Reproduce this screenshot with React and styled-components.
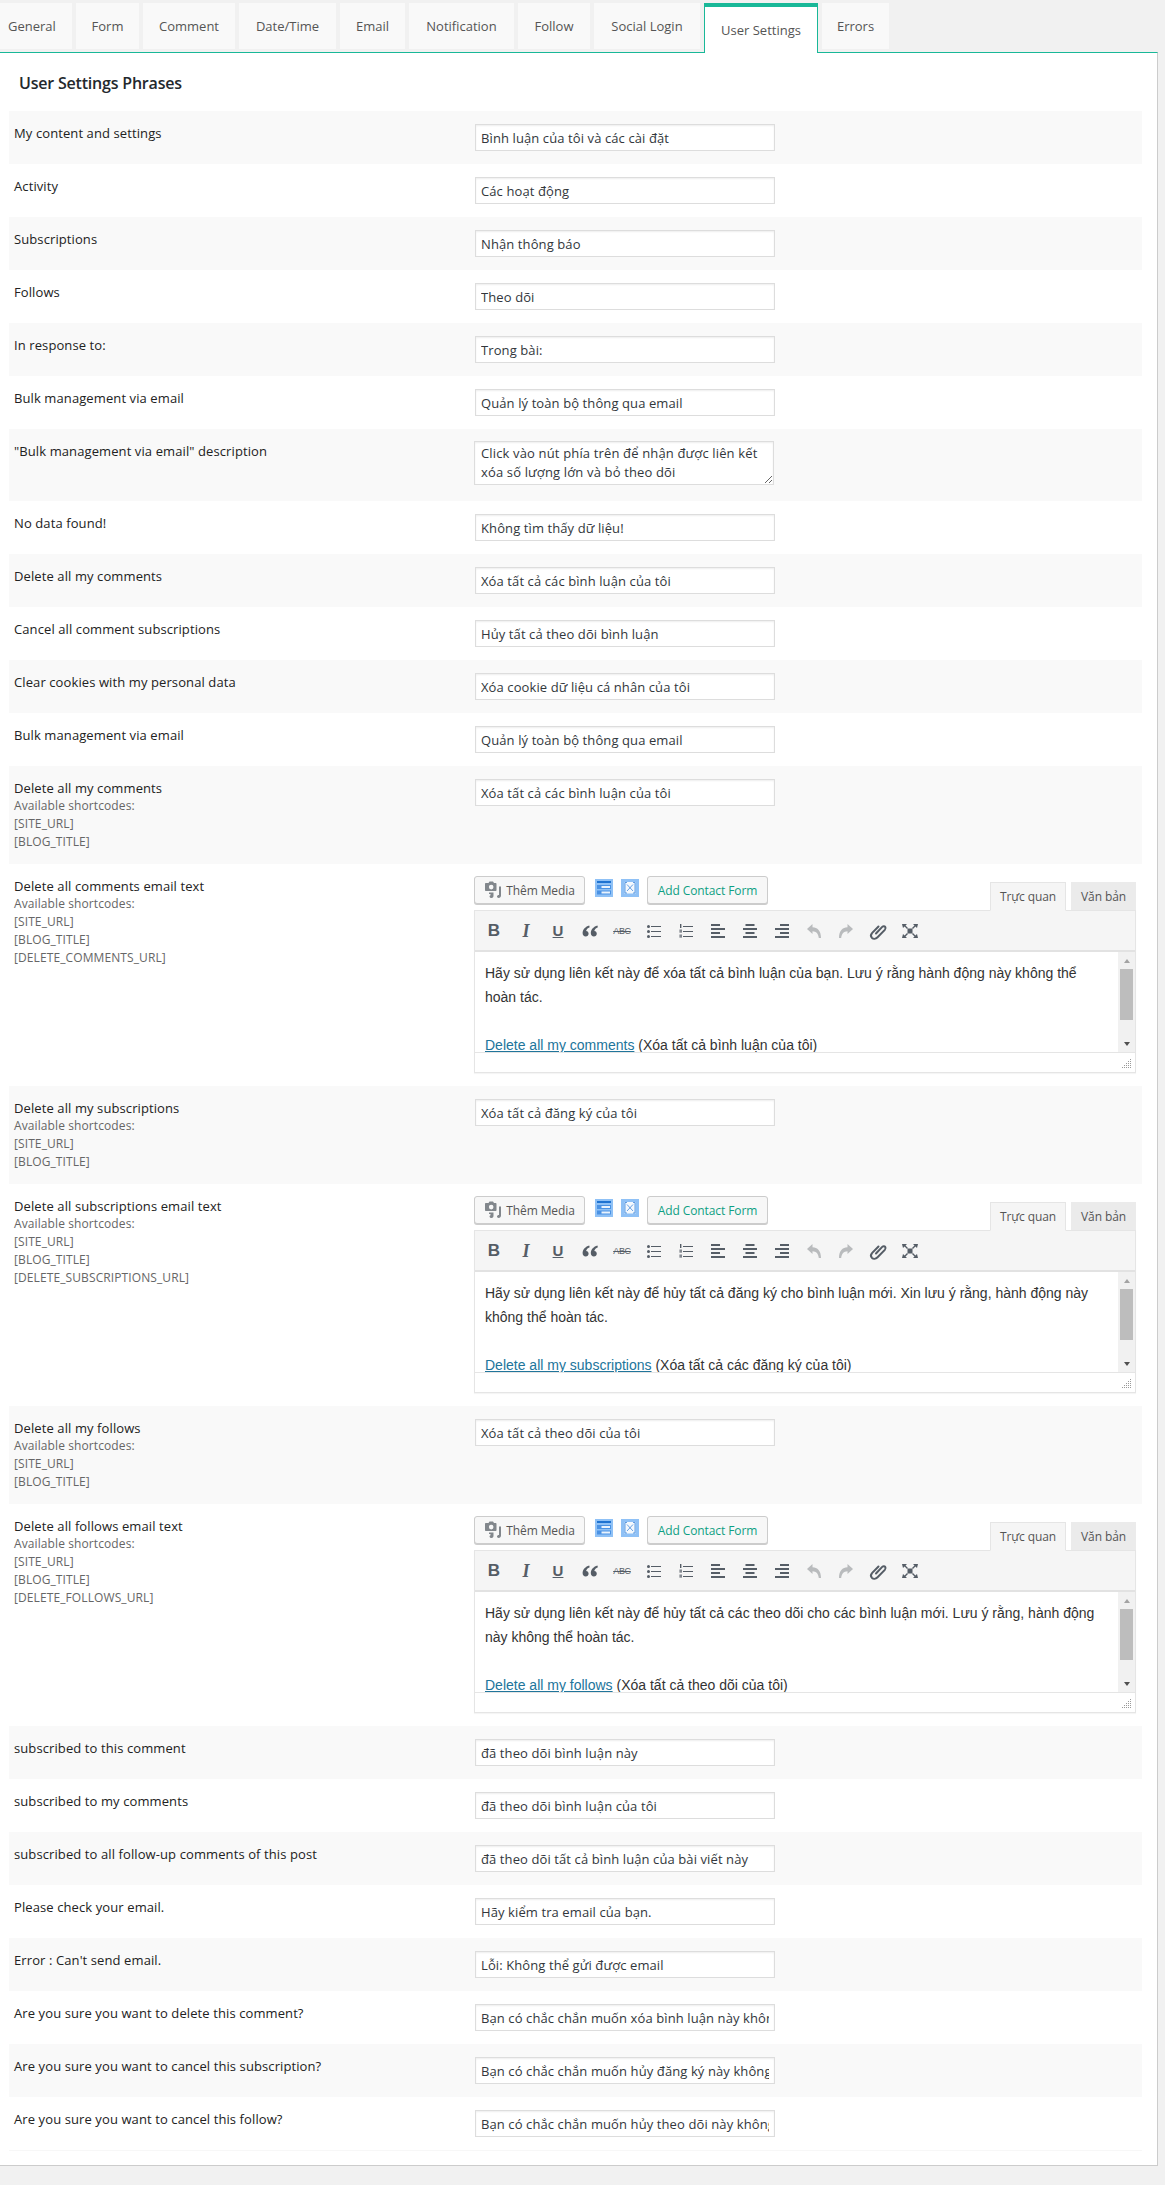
import React from 'react';
import styled, { createGlobalStyle } from 'styled-components';

const TEAL = '#19b898';

const GlobalStyle = createGlobalStyle`
  html, body { margin: 0; padding: 0; background: #f1f1f1; }
  body { font-family: "Open Sans", "Noto Sans", sans-serif; font-size: 13px; color: #444; }
`;

const Page = styled.div`
  width: 1165px;
  height: 2185px;
  padding-top: 3px;
  box-sizing: border-box;
  overflow: hidden;
`;

const TabBar = styled.div`
  display: flex;
  gap: 4px;
  width: 1158px;
  height: 49px;
`;

const Tab = styled.div`
  box-sizing: border-box;
  width: ${(p) => p.$w}px;
  height: ${(p) => (p.$active ? 50 : 46)}px;
  display: flex;
  align-items: center;
  justify-content: ${(p) => (p.$first ? 'flex-start' : 'center')};
  padding-left: ${(p) => (p.$first ? 8 : 0)}px;
  background: ${(p) => (p.$active ? '#fff' : '#f9f9f9')};
  color: #555;
  font-size: 13px;
  font-weight: 500;
  white-space: nowrap;
  position: relative;
  z-index: ${(p) => (p.$active ? 2 : 1)};
  ${(p) => p.$active && `
    border-top: 4px solid ${TEAL};
    border-left: 1px solid ${TEAL};
    border-right: 1px solid ${TEAL};
  `}
`;

const Panel = styled.div`
  box-sizing: border-box;
  width: 1158px;
  height: 2114px;
  background: #fff;
  border-top: 1px solid ${TEAL};
  border-right: 1px solid #ccc;
  border-bottom: 1px solid #ccc;
  padding: 0 15px 15px 9px;
`;

const Title = styled.h3`
  margin: 0 0 17px;
  padding: 19px 0 0 10px;
  font-size: 16px;
  line-height: 22px;
  font-weight: 600;
  letter-spacing: -0.2px;
  color: #23282d;
`;

const Row = styled.div`
  display: grid;
  grid-template-columns: 466px 1fr;
  padding: 13px 0;
  background: #fff;
  &:nth-child(odd) { background: #f9f9f9; }
  &:last-child { border-bottom: 1px solid #f7f7f7; margin-bottom: -1px; }
`;

const LabelCell = styled.div`
  padding-left: 5px;
  font-size: 13px;
  line-height: 18px;
  letter-spacing: 0.1px;
  color: #222;
`;

const Hint = styled.div`
  font-size: 12px;
  color: #666;
  letter-spacing: 0.1px;
`;

const TextInput = styled.input`
  display: block;
  box-sizing: border-box;
  width: 300px;
  height: 27px;
  margin: 0;
  padding: 0 5px;
  background: #fff;
  border: 1px solid #ddd;
  box-shadow: inset 0 1px 2px rgba(0, 0, 0, 0.07);
  border-radius: 0;
  outline: none;
  font-family: inherit;
  font-size: 13px;
  letter-spacing: 0.1px;
  color: #32373c;
`;

const TextArea = styled.textarea`
  display: block;
  box-sizing: border-box;
  width: 300px;
  height: 44px;
  margin: -1px 0 3px -1px;
  padding: 2px 6px;
  background: #fff;
  border: 1px solid #ddd;
  box-shadow: inset 0 1px 2px rgba(0, 0, 0, 0.07);
  border-radius: 0;
  outline: none;
  overflow: hidden;
  font-family: inherit;
  font-size: 13px;
  line-height: 19px;
  letter-spacing: 0.15px;
  color: #32373c;
`;

const Editor = styled.div`
  width: 662px;
  margin: -1px 0 0 -1px;
`;

const EditorTop = styled.div`
  display: flex;
  align-items: flex-start;
  height: 34px;
`;

const MediaButton = styled.div`
  box-sizing: border-box;
  display: flex;
  align-items: center;
  justify-content: center;
  gap: 4px;
  width: ${(p) => p.$w}px;
  height: 28px;
  margin-left: ${(p) => p.$ml || 0}px;
  background: #f7f7f7;
  border: 1px solid #ccc;
  border-radius: 3px;
  box-shadow: 0 1px 0 #ccc;
  font-size: 12px;
  letter-spacing: -0.1px;
  color: ${(p) => (p.$green ? '#0e9f83' : '#555')};
  white-space: nowrap;
`;

const ShortcodeIcon = styled.svg`
  width: 18px;
  height: 18px;
  margin-top: 3px;
  margin-left: ${(p) => p.$ml}px;
  flex: none;
`;

const ModeTabs = styled.div`
  display: flex;
  gap: 5px;
  margin: 6px 0 0 auto;
  position: relative;
  z-index: 1;
`;

const ModeTab = styled.div`
  box-sizing: border-box;
  width: ${(p) => p.$w}px;
  height: ${(p) => (p.$active ? 29 : 28)}px;
  display: flex;
  align-items: center;
  justify-content: center;
  background: ${(p) => (p.$active ? '#f5f5f5' : '#ebebeb')};
  border: 1px solid ${(p) => (p.$active ? '#e5e5e5' : '#ebebeb')};
  border-bottom: ${(p) => (p.$active ? '1px solid #f5f5f5' : '1px solid #ebebeb')};
  font-size: 12px;
  letter-spacing: -0.1px;
  color: #555;
`;

const Frame = styled.div`
  border: 1px solid #e5e5e5;
  border-top: none;
  background: #fff;
  box-shadow: 0 1px 1px rgba(0, 0, 0, 0.04);
`;

const Toolbar = styled.div`
  box-sizing: border-box;
  height: 42px;
  display: flex;
  align-items: center;
  gap: 12px;
  padding: 0 0 0 9px;
  background: #f5f5f5;
  border-top: 1px solid #e5e5e5;
  border-bottom: 2px solid #e2e2e2;
`;

const ToolIcon = styled.div`
  width: 20px;
  height: 20px;
  flex: none;
  display: flex;
  align-items: center;
  justify-content: center;
  color: ${(p) => (p.$off ? '#b9bbbd' : '#555d66')};
  font-family: ${(p) => (p.$italic ? '"Liberation Serif", serif' : '"Liberation Sans", sans-serif')};
  font-size: ${(p) => p.$size || 17}px;
  font-weight: 700;
  font-style: ${(p) => (p.$italic ? 'italic' : 'normal')};
  text-decoration: ${(p) => p.$deco || 'none'};
  line-height: 20px;
`;

const Strike = styled.span`
  font-size: 9px;
  text-decoration: line-through;
  letter-spacing: -0.3px;
  font-weight: 400;
`;

const Body = styled.div`
  display: flex;
  height: 100px;
`;

const Content = styled.div`
  flex: 1;
  min-width: 0;
  overflow: hidden;
  box-sizing: border-box;
  padding: 9px 9px 0 10px;
  font-family: "Liberation Sans", Arial, sans-serif;
  font-size: 14px;
  line-height: 24px;
  color: #333;
`;

const Para = styled.p`
  margin: 0 0 24px;
`;

const MailLink = styled.span`
  color: #21759b;
  text-decoration: underline;
`;

const Scroll = styled.div`
  width: 17px;
  flex: none;
  background: #f1f1f1;
  display: flex;
  flex-direction: column;
  align-items: center;
  padding-top: 7px;
  box-sizing: border-box;
`;

const ScrollThumb = styled.div`
  width: 13px;
  height: 51px;
  margin: 6px 0 22px;
  background: #bdbdbd;
`;

const Arrow = styled.div`
  width: 0;
  height: 0;
  border-left: 3.5px solid transparent;
  border-right: 3.5px solid transparent;
  ${(p) => (p.$up ? 'border-bottom: 4px solid #a3a3a3;' : 'border-top: 4px solid #505050;')}
`;

const StatusBar = styled.div`
  box-sizing: border-box;
  height: 20px;
  border-top: 1px solid #e5e5e5;
  display: flex;
  justify-content: flex-end;
  align-items: flex-end;
  padding: 0 3px 3px 0;
`;

const icon = (children) => (
  <svg width="20" height="20" viewBox="0 0 20 20" fill="currentColor">{children}</svg>
);

const BulletsIcon = () => icon(
  <>
    <rect x="3" y="4" width="3" height="3" rx="1.5" />
    <rect x="3" y="9" width="3" height="3" rx="1.5" />
    <rect x="3" y="14" width="3" height="3" rx="1.5" />
    <rect x="7" y="5" width="10" height="1" />
    <rect x="7" y="10" width="10" height="1" />
    <rect x="7" y="15" width="10" height="1" />
  </>
);

const NumbersIcon = () => icon(
  <>
    <rect x="4" y="3" width="1.4" height="4" />
    <rect x="3.4" y="8.5" width="2.6" height="3.2" opacity="0.7" />
    <rect x="3.4" y="13.5" width="2.6" height="3.2" opacity="0.7" />
    <rect x="7" y="5" width="10" height="1" />
    <rect x="7" y="10" width="10" height="1" />
    <rect x="7" y="15" width="10" height="1" />
  </>
);

// x offsets for the short bars of each alignment icon
const AlignIcon = ({ x }) => icon(
  <>
    <rect x={x} y="3" width="9" height="2" />
    <rect x="3" y="7" width="14" height="2" />
    <rect x={x} y="11" width="9" height="2" />
    <rect x="3" y="15" width="14" height="2" />
  </>
);

const QuoteIcon = () => icon(
  <path d="M9.2 4.5C5.6 5.6 2.6 8.3 2.6 12c0 2.1 1.3 3.6 3.1 3.6 1.6 0 2.9-1.2 2.9-2.8 0-1.5-1-2.6-2.5-2.7.3-1.7 1.6-3.1 3.6-3.9zM17.4 4.500c-3.600 1.100-6.600 3.800-6.600 7.500 0 2.100 1.300 3.600 3.100 3.600 1.600 0 2.900-1.200 2.900-2.800 0-1.500-1-2.600-2.500-2.700.3-1.700 1.600-3.100 3.600-3.900z" />
);

const UndoIcon = ({ flip }) => (
  <svg width="20" height="20" viewBox="0 0 20 20" fill="currentColor" style={flip ? { transform: 'scaleX(-1)' } : undefined}>
    <path d="M3 8l5.5-5v3.2c5 .2 8.5 3.4 8.5 10.8h-2.2c-.4-4.4-2.6-6.6-6.300-6.800V13z" />
  </svg>
);

const LinkIcon = () => (
  <svg width="20" height="20" viewBox="0 0 20 20" fill="none" stroke="currentColor" strokeWidth="2">
    <path d="M8 12.500l6.200-6.600c1-1 2.500-.9 3 0 .7 1 .4 2.100-.4 3l-7.500 7.600c-1.600 1.600-4 1.600-5.300.4-1.400-1.400-1.200-3.500.2-5l6.300-6.400" strokeLinecap="round" />
  </svg>
);

const FullscreenIcon = () => icon(
  <>
    <path d="M2 3h5L5.500 4.600 8 7 7 8 4.600 5.500 3 7zM18 3h-5l1.500 1.600L12 7l1 1 2.400-2.500L17 7zM2 17h5l-1.500-1.600L8 13l-1-1-2.400 2.500L3 13zM18 17h-5l1.500-1.600L12 13l1-1 2.400 2.500L17 13z" />
    <rect x="7.500" y="7.500" width="5" height="5" />
  </>
);

const MediaIcon = () => (
  <svg width="18" height="18" viewBox="0 0 18 18" fill="#82878c">
    <path d="M2.500 2h2l1-1.500h3.500l1 1.500h1.500c.6 0 1 .4 1 1v6c0 .6-.4 1-1 1h-9.500c-.6 0-1-.4-1-1V3c0-.6.4-1 1-1zm4.700 1.800a2.300 2.300 0 100 4.600 2.300 2.300 0 000-4.600z" />
    <path d="M15 5.500h2v9c0 1.400-1 2.500-2.300 2.500-1 0-1.700-.6-1.700-1.400 0-.9.800-1.600 2-1.600V5.500zM5 11.500h4.500v3.500c0 1.100-.9 2-2 2S5.500 16.300 5.500 15.500c0-.6.400-1.100 1-1.300v-1.200H5z" />
  </svg>
);

const FormsIcon = () => (
  <ShortcodeIcon viewBox="0 0 18 18" $ml={10}>
    <rect width="18" height="18" fill="#8fc1f6" />
    <rect x="2" y="2" width="14" height="2" fill="#1f73d1" />
    <rect x="2" y="6" width="14" height="4" fill="#4a92e4" />
    <rect x="2" y="11.500" width="14" height="4" fill="#4a92e4" />
    <rect x="6.500" y="7" width="8.500" height="2" fill="#eaf3fd" />
    <rect x="6.500" y="12.500" width="8.500" height="2" fill="#eaf3fd" />
  </ShortcodeIcon>
);

const CloseFormIcon = () => (
  <ShortcodeIcon viewBox="0 0 18 18" $ml={8}>
    <rect width="18" height="18" fill="#8fc1f6" />
    <rect x="3.500" y="3" width="11" height="11.500" fill="#f4f9fe" />
    <path d="M6 3.500H4v10.500h2M12 3.500h2v10.500h-2M6 5.500l6 6.500M12 5.500l-6 6.500" fill="none" stroke="#2a78d6" strokeWidth="0.7" />
  </ShortcodeIcon>
);

const ResizeGrip = () => (
  <svg width="10" height="10" viewBox="0 0 10 10" fill="#9a9a9a">
    {[[8, 0], [6, 2], [8, 2], [4, 4], [6, 4], [8, 4], [2, 6], [4, 6], [6, 6], [8, 6], [0, 8], [2, 8], [4, 8], [6, 8], [8, 8]].map(([x, y]) => (
      <rect key={`${x}-${y}`} x={x} y={y} width="1" height="1" />
    ))}
  </svg>
);

const EmailEditor = ({ text, linkText, after }) => (
  <Editor>
    <EditorTop>
      <MediaButton $w={111}><MediaIcon />Thêm Media</MediaButton>
      <FormsIcon />
      <CloseFormIcon />
      <MediaButton $w={121} $ml={8} $green>Add Contact Form</MediaButton>
      <ModeTabs>
        <ModeTab $w={76} $active>Trực quan</ModeTab>
        <ModeTab $w={65}>Văn bản</ModeTab>
      </ModeTabs>
    </EditorTop>
    <Frame>
      <Toolbar>
        <ToolIcon>B</ToolIcon>
        <ToolIcon $size={18} $italic>I</ToolIcon>
        <ToolIcon $size={15} $deco="underline">U</ToolIcon>
        <ToolIcon><QuoteIcon /></ToolIcon>
        <ToolIcon><Strike>ABC</Strike></ToolIcon>
        <ToolIcon><BulletsIcon /></ToolIcon>
        <ToolIcon><NumbersIcon /></ToolIcon>
        <ToolIcon><AlignIcon x={3} /></ToolIcon>
        <ToolIcon><AlignIcon x={5.5} /></ToolIcon>
        <ToolIcon><AlignIcon x={8} /></ToolIcon>
        <ToolIcon $off><UndoIcon /></ToolIcon>
        <ToolIcon $off><UndoIcon flip /></ToolIcon>
        <ToolIcon><LinkIcon /></ToolIcon>
        <ToolIcon><FullscreenIcon /></ToolIcon>
      </Toolbar>
      <Body>
        <Content>
          <Para>{text}</Para>
          <Para><MailLink>{linkText}</MailLink> {after}</Para>
        </Content>
        <Scroll>
          <Arrow $up />
          <ScrollThumb />
          <Arrow />
        </Scroll>
      </Body>
      <StatusBar><ResizeGrip /></StatusBar>
    </Frame>
  </Editor>
);

const rows = [
  { label: 'My content and settings', value: 'Bình luận của tôi và các cài đặt' },
  { label: 'Activity', value: 'Các hoạt động' },
  { label: 'Subscriptions', value: 'Nhận thông báo' },
  { label: 'Follows', value: 'Theo dõi' },
  { label: 'In response to:', value: 'Trong bài:' },
  { label: 'Bulk management via email', value: 'Quản lý toàn bộ thông qua email' },
  { label: '"Bulk management via email" description', area: 'Click vào nút phía trên để nhận được liên kết xóa số lượng lớn và bỏ theo dõi' },
  { label: 'No data found!', value: 'Không tìm thấy dữ liệu!' },
  { label: 'Delete all my comments', value: 'Xóa tất cả các bình luận của tôi' },
  { label: 'Cancel all comment subscriptions', value: 'Hủy tất cả theo dõi bình luận' },
  { label: 'Clear cookies with my personal data', value: 'Xóa cookie dữ liệu cá nhân của tôi' },
  { label: 'Bulk management via email', value: 'Quản lý toàn bộ thông qua email' },
  { label: 'Delete all my comments', hints: ['[SITE_URL]', '[BLOG_TITLE]'], value: 'Xóa tất cả các bình luận của tôi' },
  {
    label: 'Delete all comments email text',
    hints: ['[SITE_URL]', '[BLOG_TITLE]', '[DELETE_COMMENTS_URL]'],
    editor: {
      text: 'Hãy sử dụng liên kết này để xóa tất cả bình luận của bạn. Lưu ý rằng hành động này không thể hoàn tác.',
      linkText: 'Delete all my comments',
      after: '(Xóa tất cả bình luận của tôi)',
    },
  },
  { label: 'Delete all my subscriptions', hints: ['[SITE_URL]', '[BLOG_TITLE]'], value: 'Xóa tất cả đăng ký của tôi' },
  {
    label: 'Delete all subscriptions email text',
    hints: ['[SITE_URL]', '[BLOG_TITLE]', '[DELETE_SUBSCRIPTIONS_URL]'],
    editor: {
      text: 'Hãy sử dụng liên kết này để hủy tất cả đăng ký cho bình luận mới. Xin lưu ý rằng, hành động này không thể hoàn tác.',
      linkText: 'Delete all my subscriptions',
      after: '(Xóa tất cả các đăng ký của tôi)',
    },
  },
  { label: 'Delete all my follows', hints: ['[SITE_URL]', '[BLOG_TITLE]'], value: 'Xóa tất cả theo dõi của tôi' },
  {
    label: 'Delete all follows email text',
    hints: ['[SITE_URL]', '[BLOG_TITLE]', '[DELETE_FOLLOWS_URL]'],
    editor: {
      text: 'Hãy sử dụng liên kết này để hủy tất cả các theo dõi cho các bình luận mới. Lưu ý rằng, hành động này không thể hoàn tác.',
      linkText: 'Delete all my follows',
      after: '(Xóa tất cả theo dõi của tôi)',
    },
  },
  { label: 'subscribed to this comment', value: 'đã theo dõi bình luận này' },
  { label: 'subscribed to my comments', value: 'đã theo dõi bình luận của tôi' },
  { label: 'subscribed to all follow-up comments of this post', value: 'đã theo dõi tất cả bình luận của bài viết này' },
  { label: 'Please check your email.', value: 'Hãy kiểm tra email của bạn.' },
  { label: "Error : Can't send email.", value: 'Lỗi: Không thể gửi được email' },
  { label: 'Are you sure you want to delete this comment?', value: 'Bạn có chắc chắn muốn xóa bình luận này không?' },
  { label: 'Are you sure you want to cancel this subscription?', value: 'Bạn có chắc chắn muốn hủy đăng ký này không?' },
  { label: 'Are you sure you want to cancel this follow?', value: 'Bạn có chắc chắn muốn hủy theo dõi này không?' },
];

const tabs = [
  ['General', 72], ['Form', 63], ['Comment', 92], ['Date/Time', 97], ['Email', 65],
  ['Notification', 105], ['Follow', 72], ['Social Login', 106], ['User Settings', 114], ['Errors', 67],
];

const App = () => (
  <Page>
    <GlobalStyle />
    <TabBar>
      {tabs.map(([name, w], i) => (
        <Tab key={name} $w={w} $first={i === 0} $active={name === 'User Settings'}>{name}</Tab>
      ))}
    </TabBar>
    <Panel>
      <Title>User Settings Phrases</Title>
      <div>
        {rows.map((row, i) => (
          <Row key={i}>
            <LabelCell>
              {row.label}
              {row.hints && (
                <Hint>
                  <div>Available shortcodes:</div>
                  {row.hints.map((h) => <div key={h}>{h}</div>)}
                </Hint>
              )}
            </LabelCell>
            <div>
              {row.editor && <EmailEditor {...row.editor} />}
              {row.area && <TextArea defaultValue={row.area} readOnly />}
              {row.value && <TextInput defaultValue={row.value} readOnly />}
            </div>
          </Row>
        ))}
      </div>
    </Panel>
  </Page>
);

export default App;
